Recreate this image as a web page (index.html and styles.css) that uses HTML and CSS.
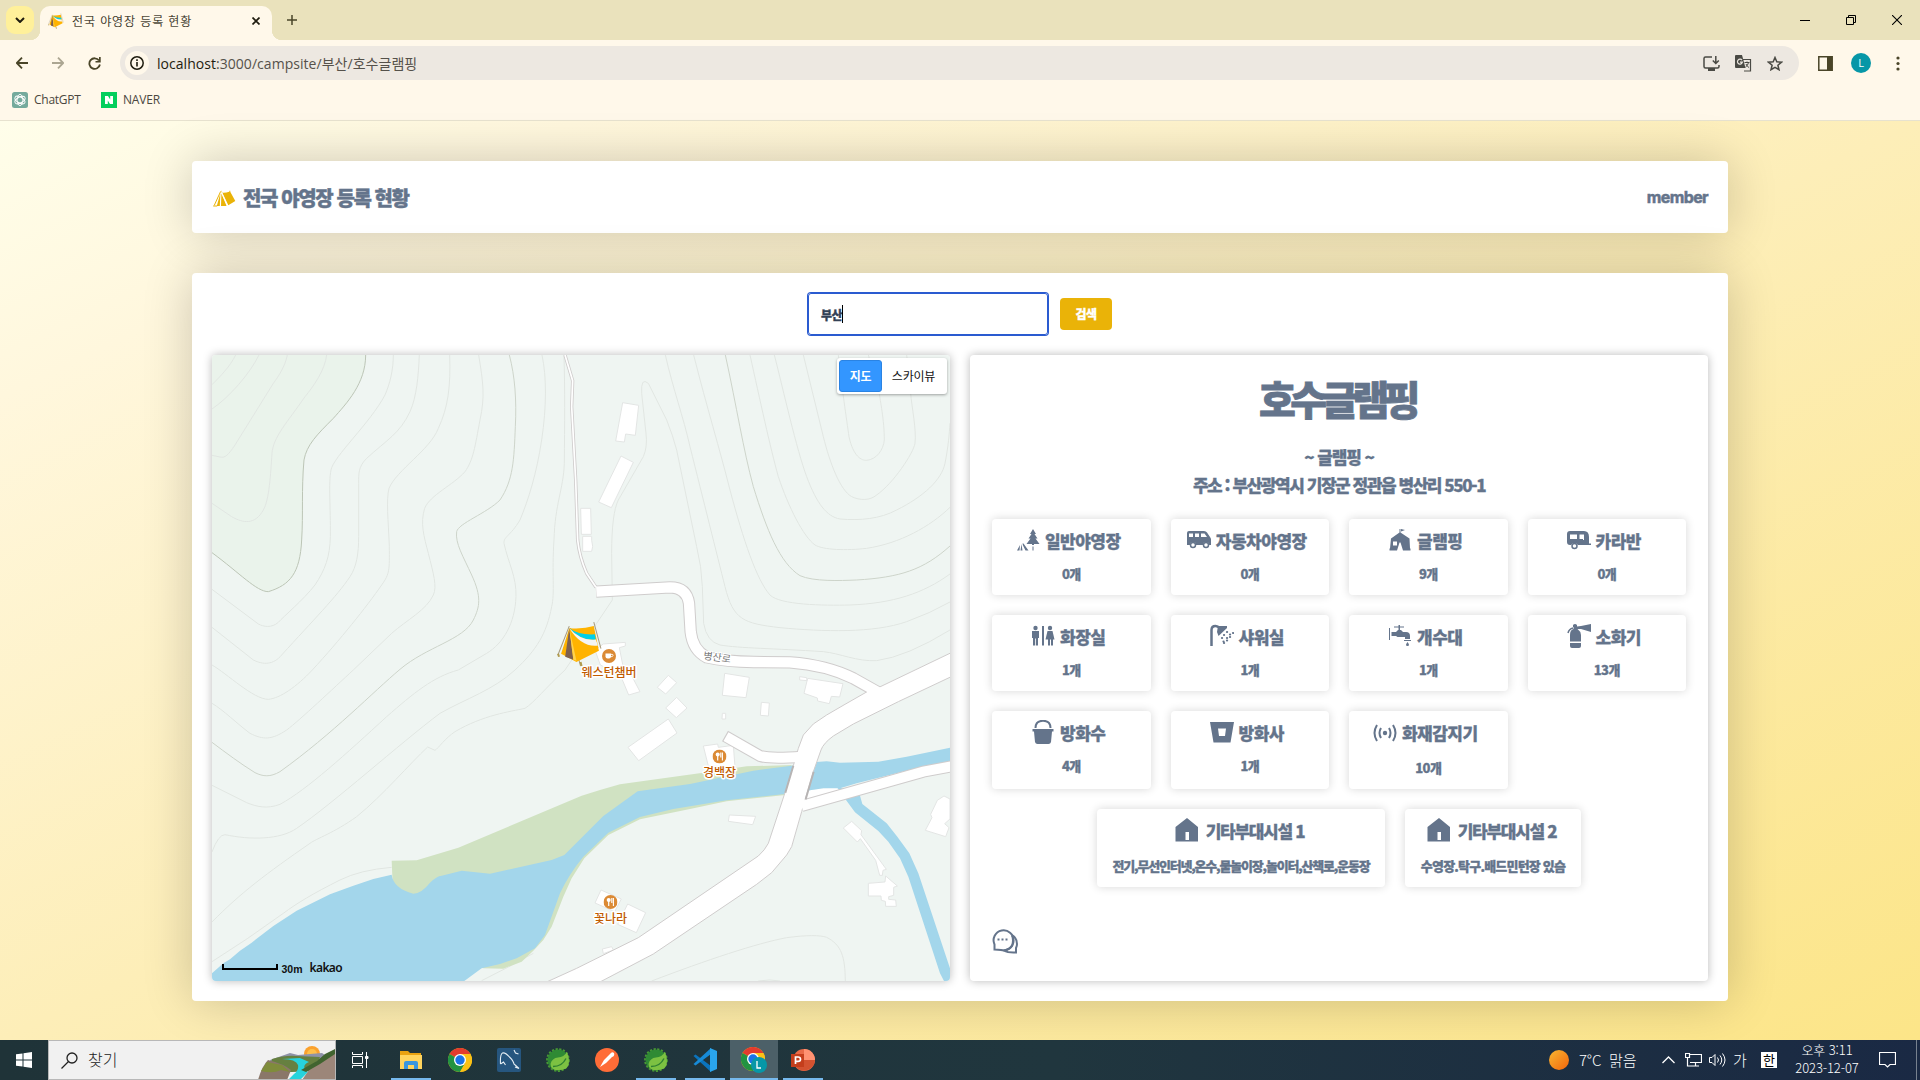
FILE: index.html
```html
<!DOCTYPE html>
<html lang="ko">
<head>
<meta charset="utf-8">
<title>전국 야영장 등록 현황</title>
<link rel="stylesheet" href="styles.css">
</head>
<body>
<svg class="defs" width="0" height="0" aria-hidden="true">
  <defs>
    <symbol id="tent-color" viewBox="0 0 45 45">
      <path d="M12 5 1 33M36 1l7 26M13 7l10 37" stroke="#a89b7e" stroke-width="1" fill="none"/>
      <path d="M12 7Q26 8 36 5l5 24-22 11-15-8z" fill="#ffb300"/>
      <path d="M12 7Q22 14 37 13l1 5Q24 20 12 7z" fill="#00cfea"/>
      <path d="M12 7Q24 20 38 18l2 6Q24 26 12 7z" fill="#f4f4f4"/>
      <path d="M12 7 8 35l8 3z" fill="#7d6050"/>
      <path d="M12 7l4 31 3 1z" fill="#ffd34d"/>
      <path d="M1 32l1 3M23 40l1 4" stroke="#b09a4c" stroke-width="2"/>
    </symbol>
    <symbol id="chrome" viewBox="0 0 24 24">
      <circle cx="12" cy="12" r="12" fill="#fbc116"/>
      <path d="M12 12 1.6 6A12 12 0 0 1 22.4 6H12z" fill="#e33b2e"/>
      <path d="M12 12 1.6 6A12 12 0 0 0 12 24l5.2-9z" fill="#229342"/>
      <path d="M12 6h10.4A12 12 0 0 1 12 24l5.2-9z" fill="#fbc116"/>
      <circle cx="12" cy="12" r="6" fill="#fff"/><circle cx="12" cy="12" r="4.700" fill="#1a73e8"/>
    </symbol>
    <symbol id="spring" viewBox="0 0 24 24">
      <circle cx="12" cy="12" r="10.800" fill="none" stroke="#4a9a35" stroke-width="2.200" stroke-dasharray="2.200 1.500"/>
      <circle cx="12" cy="12" r="10.500" fill="#2f8a34"/>
      <path d="M21 4q3 8 1.500 13T13 22Q5 23 4.500 16 6 10 12 9.500T21 4z" fill="#7cc142"/>
      <path d="M7 18.500q9 0 13-8" stroke="#2f8132" stroke-width="1.400" fill="none"/>
    </symbol>
    <symbol id="house" viewBox="0 0 24 24"><path d="M12 0 23 9v14.500H.5V9zM10.500 14v8h3.500v-8z" fill-rule="evenodd"/></symbol>
    <symbol id="fork" viewBox="0 0 14 14"><circle cx="7" cy="7" r="7" fill="#db8a35"/><circle cx="5.200" cy="5" r="2" fill="#fff"/><path d="M5.200 5v6" stroke="#fff" stroke-width="1.200"/><path d="M8.300 3v5M9.900 3v8" stroke="#fff" stroke-width="1.100"/></symbol>
  </defs>
</svg>

<header class="chrome">
  <div class="tabstrip">
    <div class="tab-search"><svg width="10" height="6" viewBox="0 0 10 6"><path d="M1 1l4 4 4-4" fill="none" stroke="#1f1c0f" stroke-width="2"/></svg></div>
    <div class="tab">
      <svg width="16" height="16"><use href="#tent-color"/></svg>
      <span class="tab-title">전국 야영장 등록 현황</span>
      <svg class="tab-close" width="8" height="8" viewBox="0 0 8 8"><path d="M.5.5l7 7M7.500.5l-7 7" stroke="#1f1c0f" stroke-width="1.700"/></svg>
    </div>
    <svg class="new-tab" width="10" height="10" viewBox="0 0 10 10"><path d="M5 0v10M0 5h10" stroke="#4a4528" stroke-width="1.500"/></svg>
    <div class="window-buttons">
      <svg width="10" height="10"><path d="M0 5.500h10" stroke="#000"/></svg>
      <svg width="10" height="10"><path d="M.5 2.500h7v7h-7zM2.500 2.500v-2h7v7h-2" fill="none" stroke="#000"/></svg>
      <svg width="10" height="10"><path d="M0 0l10 10M10 0 0 10" stroke="#000" stroke-width="1.100"/></svg>
    </div>
  </div>
  <div class="toolbar">
    <svg class="nav" width="12" height="12" viewBox="0 0 12 12"><path d="M12 6H1M6 .7.8 6 6 11.300" fill="none" stroke="#4a4528" stroke-width="1.800"/></svg>
    <svg class="nav faded" width="12" height="12" viewBox="0 0 12 12"><path d="M0 6h11M6 .7 11.200 6 6 11.300" fill="none" stroke="#4a4528" stroke-width="1.800"/></svg>
    <svg class="nav reload" width="13" height="13" viewBox="0 0 13 13"><path d="M11 3.500a5.300 5.300 0 1 0 .9 4" fill="none" stroke="#4a4528" stroke-width="1.800"/><path d="M12.700 0v5.500H7.500V4H11V0z" fill="#4a4528"/></svg>
    <div class="address-bar">
      <span class="site-info"><svg width="14" height="14" viewBox="0 0 14 14"><circle cx="7" cy="7" r="6.200" fill="none" stroke="#1f1c0f" stroke-width="1.500"/><path d="M7 6v4.500M7 3.200v1.700" stroke="#1f1c0f" stroke-width="1.600"/></svg></span>
      <span class="url"><b>localhost</b>:3000/campsite/부산/호수글램핑</span>
      <svg class="bar-icon" width="17" height="15" viewBox="0 0 17 15"><path d="M9 1H2.500Q1 1 1 2.500v8Q1 12 2.500 12h12q1.500 0 1.500-1.500V9M12.800 0v7M9.800 4.500l3 3 3-3" fill="none" stroke="#4a4a44" stroke-width="1.500"/><path d="M5 12h7v3H5z" fill="#4a4a44"/></svg>
      <svg class="bar-icon" width="17" height="17" viewBox="0 0 17 17"><path d="M7.500 4.500h8v11.500H9" fill="none" stroke="#4a4a44" stroke-width="1.200"/><path d="M0 1q0-1 1-1h6l3.500 13H1q-1 0-1-1z" fill="#4a4a44"/><path d="M7 5.200a2.500 2.500 0 1 0 .4 2H5" stroke="#ede8e1" stroke-width="1.200" fill="none"/><path d="M9.500 7.500h5M12 6.500v1M13.500 7.500q-.5 3-3 4.500M11 9q1 2.500 3 3.500" stroke="#4a4a44" fill="none"/></svg>
      <svg class="bar-icon" width="16" height="15" viewBox="0 0 16 15"><path d="M8 1.500l1.800 4.300 4.700.4-3.600 3 1.100 4.500L8 11.300l-4 2.400 1.100-4.500-3.600-3 4.700-.4z" fill="none" stroke="#4a4a44" stroke-width="1.500"/></svg>
    </div>
    <svg class="side-panel" width="15" height="15"><path d="M.8.8h13.400v13.400H.8z" fill="none" stroke="#4a4528" stroke-width="1.500"/><path d="M9 1h5v13H9z" fill="#4a4528"/></svg>
    <span class="avatar">L</span>
    <svg class="kebab" width="4" height="15"><g fill="#4a4528"><circle cx="2" cy="2" r="1.600"/><circle cx="2" cy="7.500" r="1.600"/><circle cx="2" cy="13" r="1.600"/></g></svg>
  </div>
  <div class="bookmarks">
    <svg width="16" height="16" viewBox="0 0 16 16"><rect width="16" height="16" rx="2.500" fill="#74aa9c"/><g fill="none" stroke="#fff" stroke-width=".9"><ellipse cx="8" cy="8" rx="2.900" ry="5.600"/><ellipse cx="8" cy="8" rx="2.900" ry="5.600" transform="rotate(60 8 8)"/><ellipse cx="8" cy="8" rx="2.900" ry="5.600" transform="rotate(120 8 8)"/></g></svg>
    <span class="bm-gpt">ChatGPT</span>
    <svg width="16" height="16" viewBox="0 0 16 16"><path fill="#03cf5d" d="M0 0h16v16H0z"/><path d="M4 4h3l2.200 3.500V4H12v8H9L6.800 8.500V12H4z" fill="#fff"/></svg>
    <span class="bm-naver">NAVER</span>
  </div>
</header>

<main class="page">
  <section class="card top-card">
    <svg class="brand" width="23" height="17" viewBox="0 0 23 17" fill="#eab308"><path d="M7.600 1.500 9 2l6.300 13.200L22.300 11 17.500 2.200 17 .3l-.8 1.500q-4 1.200-7.400.7L8.200.5z"/><path d="M7.400 3 6.800 16h-3zM8.400 3.500 13.600 16H8z"/><path d="M7.600 1.500 1.200 15.500M.2 16h4" stroke="#eab308" stroke-width="1"/><path d="M8.800 3 14.600 16" stroke="#fff" stroke-width=".9"/></svg>
    <h1 class="site-title">전국 야영장 등록 현황</h1>
    <a class="member">member</a>
  </section>

  <section class="card main-card">
    <form class="search-form">
      <div class="search-input">부산<i class="caret"></i></div>
      <div class="search-button">검색</div>
    </form>
    <div class="columns">
      <div class="map">
        <svg class="map-canvas" viewBox="212 355 738 626">
          <path d="M212 355h738v626H212z" fill="#eff5f2"/>
          <g transform="translate(200 340) scale(.33333)" class="contour">
            <path class="forest" d="M36 45H497C497 130 440 190 400 235C350 285 320 315 312 360C304 450 310 520 305 600C300 700 270 735 205 755C170 755 120 700 36 638Z"/>
            <path class="strong" d="M497 45C497 130 440 190 400 235C350 285 320 315 312 360C304 450 310 520 305 600C300 700 270 735 205 755C170 755 120 700 36 638"/>
            <path d="M107 45C90 80 60 110 36 134M177 45C150 100 90 170 36 207M262 45C255 80 235 110 220 130L105 315C85 345 75 355 60 351L36 346"/>
            <path d="M380 45C375 90 340 140 315 170C260 250 220 290 216 340C212 400 208 480 190 510C165 555 130 550 95 530L36 490"/>
            <path d="M580 45C580 90 570 130 555 165C510 250 400 350 393 390C385 430 392 500 391 590C390 650 375 690 345 735C310 780 250 830 235 847C215 865 190 860 175 852L36 748"/>
            <path d="M658 45C655 110 650 170 630 215C600 280 560 300 500 355C475 380 476 400 476 430V590C476 640 470 680 450 710C410 770 340 840 245 945C220 975 190 975 160 960L36 862"/>
            <path d="M749 45C752 140 745 200 715 265C690 330 590 390 567 445C558 480 565 540 568 620C568 690 570 700 545 735C500 800 420 900 337 990C290 1040 240 1075 205 1078C160 1078 80 1000 36 975"/>
            <path d="M836 45C850 130 855 170 840 240C825 320 820 360 795 395C760 435 690 465 674 505C660 550 672 590 685 640C700 700 712 740 700 765C680 810 620 840 575 880L460 990C400 1045 300 1140 260 1170C215 1200 190 1200 150 1180C110 1150 70 1110 36 1090"/>
            <path class="mid" d="M928 45C945 110 950 180 946 260C942 360 940 420 900 480C860 520 775 550 770 575C765 610 790 650 815 705C845 770 840 800 820 840C790 900 680 920 600 988C520 1055 400 1180 240 1295C210 1312 190 1310 165 1298C120 1270 80 1240 36 1207"/>
            <path d="M1026 45C1040 110 1040 200 1025 300C1010 400 985 480 960 540C930 590 910 590 912 610C925 670 950 710 948 770C945 850 910 910 860 940L775 990C700 1010 640 1060 560 1130C440 1240 320 1350 240 1393C200 1408 170 1400 140 1388L36 1336"/>
            <path d="M1092 45C1095 150 1094 250 1093 370C1090 450 1065 490 1062 600C1055 700 1065 760 1055 800C1040 880 1010 930 945 990C880 1050 800 1075 720 1120C600 1210 400 1390 290 1465C240 1500 150 1500 75 1484Q55 1484 36 1536"/>
            <path d="M1237 780L1190 850 1095 990C1040 1040 1000 1090 975 1105C930 1115 850 1125 765 1175C735 1195 715 1225 705 1231L683 1221C630 1270 550 1365 470 1430C400 1480 350 1495 330 1510C200 1600 120 1660 36 1746"/>
            <path d="M575 1582Q480 1590 420 1620C340 1660 290 1690 250 1720Q140 1800 36 1865M845 1922Q930 1880 1000 1840"/>
          </g>
          <g transform="translate(540 340) scale(.33333)" class="contour">
            <path d="M217 780L215 640Q215 520 235 480L310 350Q323 320 318 280L305 160Q302 110 325 130L380 240Q400 290 410 330L470 620Q485 680 487 740L491 850Q500 905 540 915C600 925 700 925 850 935C900 940 950 965 1010 962Q1100 950 1230 870"/>
            <path d="M376 45C400 150 430 230 450 320C490 480 530 640 555 740C580 840 610 850 720 863C850 875 1000 880 1100 845Q1170 820 1230 786"/>
            <path d="M461 45C500 200 540 330 570 450C610 600 650 720 690 765C720 795 850 797 930 795C1060 790 1150 760 1230 702"/>
            <path class="mid" d="M556 45C590 200 610 330 640 440C680 570 720 670 780 707C820 725 900 722 950 720C1080 712 1150 690 1230 618"/>
            <path d="M630 45C660 180 690 320 715 410C745 500 790 590 825 615C850 630 920 632 980 625C1080 610 1170 560 1230 502"/>
            <path d="M703 45C730 150 770 330 800 410C830 490 860 530 900 537C960 542 1020 537 1070 510C1150 470 1205 420 1215 370C1225 320 1228 280 1230 250"/>
            <path d="M790 45L850 290C870 370 900 450 935 470C960 482 990 482 1010 465C1060 430 1120 340 1125 310C1130 270 1115 200 1112 160L1100 45"/>
            <path d="M895 45C905 140 920 240 927 290C940 350 965 362 980 361C1010 358 1030 330 1033 300C1033 240 1020 180 1018 160L985 45"/>
          </g>
          <g transform="translate(540 600) scale(.33333)">
            <g class="contour"><path d="M335 1143C500 1080 650 1030 740 1013C800 1005 840 1005 860 1012C905 1035 915 1070 916 1143M655 1143Q690 1137 720 1143"/></g>
            <path fill="#d0e2c2" d="M-445 782L-370 781-245 743 125 587 180 570 240 553 500 517 620 499 755 495 735 585 560 604 450 627 300 658 205 705 133 775 95 835 70 890 35 980 10 1020-20 1052-55 1085-110 1106-170 1105-440 900z"/>
            <path fill="#fff" d="M735 582L850 565 890 563 905 572 800 600z"/>
            <path fill="#a3d6eb" d="M-984 1120L-950 1090-930 1078-900 1052-865 1028-800 978-730 932-630 883-560 857-500 837-445 824Q-440 865-380 881Q-355 880-330 848Q-310 828-295 827L-235 812-150 821 35 780 73 765 190 648 293 574 450 552 640 512 755 497 830 486 860 484 900 488 1015 485 1100 470 1230 443V485L1160 497 950 550 900 565 850 565 735 582 560 601 400 627 300 651 205 698 130 770Q85 825 60 880L15 1005-15 1045-70 1075-120 1092-175 1105-227 1143H-984z"/>
            <path fill="#a3d6eb" d="M890 560L918 600 945 637 1015 693 1045 725 1080 775 1105 830 1200 1120 1212 1143H1230V1105L1135 820 1108 760 1072 710 1040 670 967 612 958 580z"/>
            <g class="building">
              <path d="M248-592l48 8-10 90-29-4-4 24-26-3zM243-432l37 19-66 136-38-17zM122-275h30l2 78h-30zM128-191h27v12l3 18-3 15h-27z"/>
              <path d="M190 132l66-5v11l-18 5 10 50 30 40 22 42-34 10-25-60-60-30-16-45zM385 226l25 22-33 34-25-20zM410 292l31 32-32 29-32-29zM385 357l26 42-115 83-32-40zM554 220l74 12-10 61-71-7zM664 307l24 2-3 39-24-2zM547 340h10v17h-11zM779 230l21 3 1 9-22-2zM803 235l106 16-10 40-25-2-6 22-35-8-1-9-40-14z"/>
              <path d="M490 438l43-6 2 10 45-6 5 65-80-3zM568 645l79 4-9 25-73-10zM935 664l30 28-2 12 76 104-10 3-2 15h-8l-12-45-46-65-9 10-42-42zM1037 828l35 30-11 4v24l-15 4v8l21 2 2 19h-32l-1-15-12-3-1-13h-38v-38l50-4zM1212 588l18 9v60l-16 14 13 12-10 27-61-19 20-38-4-10 20-42z"/>
              <path d="M183 870l61 27-20 38-59-26zM263 912l54 26-28 60-56-25zM187 1047l28-7 5 10-30 11z"/>
            </g>
            <g class="road-edge">
              <path d="M75-735L98-658 95-580 107-360 113-180Q118-130 140-80L168-38" stroke-width="10"/>
              <path d="M168-25L390-38Q440-38 447 10L452 95Q458 150 500 172 560 185 640 186L750 187Q860 195 940 235L1020 280" stroke-width="37"/>
              <path d="M555 408L660 468Q690 477 785 470" stroke-width="36"/>
              <path d="M785 618L1150 515 1240 498" stroke-width="36"/>
            </g>
            <path class="main-road" d="M20 1146L110 1105 295 1013 655 768Q675 750 685 730L735 578 760 497 775 445 790 405 820 372 860 345 915 313 985 273 1017 262 1240 155V227L1075 305 940 372 880 408Q850 430 843 450L820 515 785 635 755 740 740 765 695 818 650 853 340 1062 180 1146z"/>
            <g class="road-fill">
              <path d="M75-735L98-658 95-580 107-360 113-180Q118-130 140-80L168-38" stroke-width="5"/>
              <path d="M169-25L390-38Q440-38 447 10L452 95Q458 150 500 172 560 185 640 186L750 187Q860 195 940 235L1020 280" stroke-width="31"/>
              <path d="M558 410L660 468Q690 477 785 470" stroke-width="30"/>
              <path d="M785 618L1150 515 1240 498" stroke-width="30"/>
            </g>
            <path d="M760 497l-24 81M821 515l-24 83" stroke="#b7b4b4" stroke-width="6"/>
          </g>
          <text class="road-name" transform="translate(703 659) rotate(8)">병산로</text>
          <g transform="translate(602 649)"><circle cx="7" cy="7" r="7" fill="#db8a35"/><path d="M3.500 4.500h5.500v3q0 2-2 2H5.500q-2 0-2-2z" fill="#fff"/><path d="M9 5.300q2.500-.3 2 1.400-.3 1.200-2 1" fill="none" stroke="#fff" stroke-width=".9"/></g>
          <use href="#fork" x="712.500" y="749.500" width="14" height="14"/>
          <use href="#fork" x="603.500" y="895" width="14" height="14"/>
          <g class="place"><text x="609" y="677">웨스턴챔버</text><text x="719.500" y="777">경백장</text><text x="610.500" y="922.500">꽃나라</text></g>
          <use href="#tent-color" x="557" y="621" width="46" height="46"/>
          <path d="M223 964v5h54v-5" fill="none" stroke="#000" stroke-width="2"/>
          <text x="281.500" y="973" class="scale">30m</text>
          <text x="309.500" y="972" class="kakao">kakao</text>
        </svg>
        <div class="map-type"><span class="active">지도</span><span>스카이뷰</span></div>
      </div>

      <article class="detail">
        <h2 class="camp-name">호수글램핑</h2>
        <p class="camp-line">~ 글램핑 ~</p>
        <p class="camp-line address">주소 : 부산광역시 기장군 정관읍 병산리 550-1</p>
        <div class="facilities">
          <div class="facility"><h3><svg viewBox="0 0 24 24"><path d="M17 1l3 5h-1.500l3 4.500h-2l4 5.500h-5.500v1h-2v-1h-5.500l4-5.500h-2l3-4.500H14zM16.500 18.500h1v4h-1zM6.500 15.500h1l5 7H9.500l-2.500-5zM5.500 16l1 6.500H4.500zM4 17l-.5 5.500H1z"/></svg>일반야영장</h3><p>0개</p></div>
          <div class="facility"><h3><svg viewBox="0 0 24 24"><path fill-rule="evenodd" d="M2 3h15q2 0 3 1.500l3 4.500q1 1 1 2.500V17h-2a3 3 0 0 0-6 0H9a3 3 0 0 0-6 0H0V5q0-2 2-2zM2 5.500V9h4V5.500zM8 5.500V9h4V5.500zM14 5.500V9h6l-2.500-3.500z"/><circle cx="6" cy="17" r="2.500" fill="none" stroke="currentColor" stroke-width="1.500"/><circle cx="19" cy="17" r="2.500" fill="none" stroke="currentColor" stroke-width="1.500"/></svg>자동차야영장</h3><p>0개</p></div>
          <div class="facility"><h3><svg viewBox="0 0 24 24"><path fill-rule="evenodd" d="M11.500 1h1v3.500l9 6 .5 10h.5v2H15l-2.500-8h-1L9 22.500H1.500v-2H2l1-10 8.500-6zM5 13.500v4h4v-4zM13 1l4 1-4 1.500z"/></svg>글램핑</h3><p>9개</p></div>
          <div class="facility"><h3><svg viewBox="0 0 24 24"><path fill-rule="evenodd" d="M3 3h14q5 0 5 6v6.500h2V17H11a4 4 0 0 0-7 0H3q-3 0-3-3V6q0-3 3-3zM3 6.500V11h7V6.500zM12.500 6.500V11h3.500v1h1V6.500z"/><circle cx="7.500" cy="18" r="2.500" fill="none" stroke="currentColor" stroke-width="1.500"/></svg>카라반</h3><p>0개</p></div>

          <div class="facility"><h3><svg viewBox="0 0 24 24"><circle cx="4.500" cy="4" r="2.200"/><circle cx="19" cy="4" r="2.200"/><path d="M1 7h7v7H7v7.500H5v-7h-.8v7H2V14H1zM11 2h2v19.500h-2zM16.500 7h5l2 8.500H22v6h-2v-6h-1v6h-2v-6h-2.500z"/></svg>화장실</h3><p>1개</p></div>
          <div class="facility"><h3><svg viewBox="0 0 24 24"><path d="M1.500 22V6q0-4 4-4 2.500 0 4 2" fill="none" stroke="currentColor" stroke-width="2.500"/><path d="M8 2h9v2L8.500 12l-1.500-4z"/><path d="M17 8h.1M20 10.500h.1M23 9h.1M14 11h.1M17 14h.1M20 13h.1M12 14h.1M13.500 17.500h.1M17 16.500h.1M14 19h.1" stroke="currentColor" stroke-width="2.200" stroke-linecap="round"/></svg>샤워실</h3><p>1개</p></div>
          <div class="facility"><h3><svg viewBox="0 0 24 24"><path d="M1 4h1v12H1zM3.500 8H8l2-2h3l2 2h3q4 0 4 4v3h-5v-2H9.500L8 12H3.500zM6 2.500h10v1H6zM10.500 1h1.500v6h-1.500zM16 16h7v1h-7zM19.500 18q3 4 0 4t0-4z"/></svg>개수대</h3><p>1개</p></div>
          <div class="facility"><h3><svg viewBox="0 0 24 24"><path fill-rule="evenodd" d="M3 11q0-5 3.500-6V3H6V1q2-2 4 0v1.500L14 2l10-2v8l-10-3h-3.500q3 2 3.500 6v6.500H3zM3 19h11v3q0 2-2 2H5q-2 0-2-2z"/><path d="M6 4Q2 5 1 9" fill="none" stroke="currentColor" stroke-width="1.500"/></svg>소화기</h3><p>13개</p></div>

          <div class="facility"><h3><svg viewBox="0 0 24 24"><path d="M1.500 9h21v2.500H21L20 22q-.5 2-2.500 2h-11Q4.500 24 4 22L3 11.500H1.500z"/><path d="M4.500 8q0-7.200 7.500-7.200T19.500 8" fill="none" stroke="currentColor" stroke-width="2"/></svg>방화수</h3><p>4개</p></div>
          <div class="facility"><h3><svg viewBox="0 0 24 24"><path fill-rule="evenodd" d="M0 2h24l-3.500 20.500H3.500zM8 8.500l1 7.500h6l1-7.500z"/></svg>방화사</h3><p>1개</p></div>
          <div class="facility alarm"><h3><svg viewBox="0 0 24 24"><circle cx="12" cy="12" r="2.200"/><path d="M4 4q-5 8 0 16M20 4q5 8 0 16M8 7q-3 5 0 10M16 7q3 5 0 10" fill="none" stroke="currentColor" stroke-width="2"/></svg>화재감지기</h3><p>10개</p></div>
        </div>
        <div class="extras">
          <div class="facility extra-one"><h3><svg><use href="#house"/></svg>기타부대시설 1</h3><p>전기,무선인터넷,온수,물놀이장,놀이터,산책로,운동장</p></div>
          <div class="facility extra-two"><h3><svg><use href="#house"/></svg>기타부대시설 2</h3><p>수영장.탁구.배드민턴장 있슴</p></div>
        </div>
        <svg class="chat" width="28" height="26" viewBox="0 0 28 26"><path d="M3.500 21.500v-5A10 10 0 1 1 10 22q-3-.3-6.500-.5z" fill="none" stroke="currentColor" stroke-width="2"/><path d="M21 7q5 3 5 9 0 2-1 4v4.500q-8 .5-12-2 6-1 8-5 2-5 0-10" fill="none" stroke="currentColor" stroke-width="2"/><path d="M6.500 11.500h2M10.500 11.500h2M14.500 11.500h2" stroke="currentColor" stroke-width="2"/></svg>
      </article>
    </div>
  </section>
</main>

<footer class="taskbar">
  <div class="start"><svg width="16" height="16"><path d="M0 2.300 6.500 1.400v6.100H0zM7.500 1.200 16 0v7.500H7.500zM0 8.500h6.500v6.100L0 13.700zM7.500 8.500H16V16l-8.500-1.200z" fill="#fff"/></svg></div>
  <div class="search">
    <svg width="17" height="17" viewBox="0 0 17 17"><circle cx="11" cy="6" r="5" fill="none" stroke="#222" stroke-width="1.300"/><path d="M7.500 9.500.5 16.500" stroke="#222" stroke-width="1.300"/></svg>
    <span>찾기</span>
    <svg class="landscape" width="77" height="36" viewBox="0 0 77 36">
      <circle cx="54" cy="10" r="8" fill="#fba12d"/><circle cx="54" cy="10" r="5" fill="#ffc04a"/>
      <path d="M12 16l20-7 8 2 24-2 6 4-4 10H14z" fill="#8f93a8"/>
      <path d="M14 15q14-4 24-3l24 1-5 14-46 2z" fill="#668040"/>
      <path d="M24 15q14 0 16 6 1 5-4 9l-6 6h12l8-8q-8-6 1-10l-9-4z" fill="#27d3dc"/>
      <path d="M0 36q4-14 10-20 16 4 23 10l-4 10z" fill="#8a7769"/>
      <path d="M3 27q12 3 20-1l9 2-8-7-15-3z" fill="#7f8c3b"/>
      <path d="M44 36q8-12 14-18l19-12v30z" fill="#9c8679"/>
      <path d="M43 26l16-9 8-7 10-5v5L62 20l-14 8z" fill="#41642f"/>
    </svg>
  </div>
  <nav class="apps">
    <div><svg width="17" height="16" viewBox="0 0 17 16" fill="none" stroke="#fff"><path d="M.5 0v2.500h10V0M.5 16v-2.500h10V16M.5 4.500h10v7H.5zM14.500 0v16"/><path d="M13.500 4.500h2.500v2h-2.500z" fill="#fff"/></svg></div>
    <div class="open"><svg width="22" height="18"><path d="M0 0h8l2 2h11v15H0z" fill="#e9a211"/><path d="M0 4h22v14H0z" fill="#ffd45e"/><path d="M4 18v-6q0-2 2-2h10q2 0 2 2v6h-4v-4H8v4z" fill="#3a96dd"/></svg></div>
    <div><svg width="24" height="24"><use href="#chrome"/></svg></div>
    <div><svg width="24" height="24"><rect width="24" height="24" rx="2" fill="#26567f"/><path d="M3.500 16Q3 6 5.500 5t7 4q4 4 4.500 7l5 4.500-4-1.500M3.500 16l3-2 2 3M17 2l1.500 3 3 1" fill="none" stroke="#e6eff5" stroke-width="1.100"/></svg></div>
    <div><svg width="24" height="24"><use href="#spring"/></svg></div>
    <div><svg width="24" height="24"><circle cx="12" cy="12" r="12" fill="#ff6c37"/><path d="M19 5q-2-2-4 1l-6 6-4 7 6-4 6-6q3-1 2-4z" fill="#fff"/></svg></div>
    <div class="open"><svg width="24" height="24"><use href="#spring"/></svg></div>
    <div class="open"><svg width="24" height="24"><path d="M.5 8l2-1.500L18 18v6z" fill="#0b74bd"/><path d="M.5 16l2 1.500L18 6V0z" fill="#178bd7"/><path d="M17 0l7 3v18l-7 3z" fill="#2aa6ee"/></svg></div>
    <div class="open current"><svg width="26" height="26" viewBox="0 0 26 26"><use href="#chrome" width="24" height="24"/><circle cx="18" cy="18" r="8" fill="#0797a7"/><path d="M16 14v7h4" stroke="#fff" stroke-width="1.300" fill="none"/></svg></div>
    <div class="open"><svg width="24" height="24"><circle cx="13" cy="12" r="11" fill="#e96b48"/><path d="M13 1a11 11 0 0 1 11 11H13z" fill="#ff9272"/><path d="M2 12h22a11 11 0 0 1-21 4z" fill="#d35230"/><path d="M0 6h13v13H0z" fill="#c43e1c"/><path d="M4.500 16V9H7q2.500 0 2.500 2.200T7 13.400H5" fill="none" stroke="#fff" stroke-width="1.700"/></svg></div>
  </nav>
  <div class="tray">
    <i class="sun"></i>
    <span class="weather">7°C&nbsp; 맑음</span>
    <svg class="chev" width="13" height="8"><path d="M.5 7l6-6 6 6" fill="none" stroke="#fff" stroke-width="1.300"/></svg>
    <svg class="net" width="17" height="14"><path d="M5 1.500h11.500v8H5M.5.500h4v4h-4zM2.500 5v8H14M10.500 9.500V13" fill="none" stroke="#fff" stroke-width="1.200"/></svg>
    <svg class="vol" width="17" height="14"><path d="M.5 4.500H3l3-3v11l-3-3H.5zM8.500 4.500q2 2.500 0 5M11 2.500q3.500 4.500 0 9M13.500.5q5 6.500 0 13" fill="none" stroke="#fff"/></svg>
    <span class="ime">가</span>
    <span class="han">한</span>
    <span class="clock">오후 3:11<br>2023-12-07</span>
    <svg class="note" width="17" height="16"><path d="M.5.500h16v12H11l-2.500 2.500L6 12.500H.5z" fill="none" stroke="#fff" stroke-width="1.200"/></svg>
    <i class="show-desktop"></i>
  </div>
</footer>
</body>
</html>
```
FILE: styles.css
```css
* { box-sizing: border-box; }
html, body { margin: 0; height: 100%; overflow: hidden; }
body {
  display: flex;
  flex-direction: column;
  width: 1920px;
  height: 1080px;
  font-family: "Noto Sans CJK KR", "Noto Sans", sans-serif;
  color: #64748b;
}
.defs { position: absolute; }
svg { display: block; flex: none; }
h1, h2, h3, p { margin: 0; }

/* Browser frame */
.chrome { height: 121px; background: #fff8ea; border-bottom: 1px solid #e7e2cf; flex: none; font-family: "Open Sans", "Noto Sans CJK KR", sans-serif; }
.tabstrip { display: flex; align-items: center; height: 40px; padding-left: 6px; background: #eae2bc; }
.tab-search { display: grid; place-items: center; width: 28px; height: 28px; border-radius: 9px; background: #fff09a; }
.tab { display: flex; align-items: center; align-self: flex-end; position: relative; width: 232px; height: 34px; margin-left: 6px; padding: 0 12px 5px 8px; border-radius: 10px 10px 0 0; background: #fff8ea; }
.tab::before, .tab::after { content: ""; position: absolute; bottom: 0; width: 10px; height: 10px; }
.tab::before { left: -10px; background: radial-gradient(circle at 0 0, transparent 10px, #fff8ea 10.5px); }
.tab::after { right: -10px; background: radial-gradient(circle at 100% 0, transparent 10px, #fff8ea 10.5px); }
.tab-title { margin-left: 8px; color: #1f1c0f; font: 300 12px "Noto Sans CJK KR", sans-serif; letter-spacing: .9px; white-space: nowrap; -webkit-text-stroke: .2px; }
.tab-close { margin-left: auto; }
.new-tab { margin-left: 15px; }
.window-buttons { display: flex; gap: 36px; margin-left: auto; padding-right: 18px; }
.toolbar { display: flex; align-items: center; height: 46px; padding: 0 20px 0 16px; border-radius: 8px 8px 0 0; background: #fff8ea; }
.nav { margin-right: 24px; }
.reload { margin-right: 19px; }
.faded { opacity: .45; }
.address-bar { display: flex; align-items: center; flex: 1; height: 34px; padding: 0 16px 0 5px; border-radius: 17px; background: #ede8e1; }
.site-info { display: grid; place-items: center; width: 24px; height: 24px; border-radius: 50%; background: #fff8ea; }
.url { margin: -1px auto 0 8px; color: #55514a; font-size: 14px; letter-spacing: .04px; }
.url b { color: #1f1c0f; font-weight: 400; }
.bar-icon { margin-left: 15px; }
.side-panel { margin-left: 19px; }
.avatar { width: 20px; height: 20px; margin: 0 25px 0 18px; border-radius: 50%; background: #0797a7; color: #fff; font-size: 11px; line-height: 20px; text-align: center; }
.bookmarks { display: flex; align-items: center; height: 28px; padding-left: 12px; color: #4a4740; font-size: 12px; line-height: 16px; }
.bookmarks span { padding-bottom: 1px; }
.bm-gpt { width: 67px; margin-left: 6px; letter-spacing: -.25px; }
.bm-naver { margin-left: 6px; letter-spacing: -.2px; }

/* Page */
.page { flex: 1; padding: 40px 192px 39px; background: linear-gradient(to bottom right, #fffeea 0%, #fff7dd 15%, #fdeeb8 50%, #fce588 100%); }
.card { border-radius: 4px; background: #fff; box-shadow: 0 0 50px rgba(0, 0, 0, .2); }
.top-card { display: flex; align-items: center; height: 72px; padding: 0 20px; }
.brand { margin: 3px 0 0 1px; }
.site-title { margin-left: 7px; font-size: 20px; font-weight: 900; letter-spacing: -1.4px; -webkit-text-stroke: .4px; }
.member { margin-left: auto; font: 700 16px Inter, sans-serif; letter-spacing: -.6px; -webkit-text-stroke: .5px; }
.main-card { height: 728px; margin-top: 40px; padding: 20px; }
.search-form { display: flex; justify-content: center; align-items: center; gap: 12px; height: 42px; }
.search-input { display: flex; align-items: center; width: 240px; height: 42px; padding-left: 12px; border: 1px solid #2a5bd0; border-radius: 3px; box-shadow: 0 0 0 1px #2a5bd0; color: #334155; font-size: 12px; font-weight: 900; letter-spacing: -.5px; -webkit-text-stroke: .3px; }
.caret { width: 1px; height: 18px; background: #000; }
.search-button { width: 52px; height: 32px; border-radius: 4px; background: #eab308; color: #fff; font-size: 12px; font-weight: 900; line-height: 32px; text-align: center; letter-spacing: -.5px; -webkit-text-stroke: .3px; }
.columns { display: grid; grid-template-columns: 1fr 1fr; gap: 20px; height: 626px; margin-top: 20px; }
.map, .detail { border-radius: 4px; box-shadow: 0 0 10px rgba(0, 0, 0, .28); }

/* Map */
.map { position: relative; }
.map-canvas { width: 738px; height: 626px; border-radius: 4px; overflow: hidden; }
.contour path { fill: none; stroke: #e1e6e2; stroke-width: 3; }
.contour .forest { fill: #eaf3eb; stroke: none; }
.contour .strong { stroke: #bcc5b6; }
.contour .mid { stroke: #cdd4ca; }
.building { fill: #fff; stroke: #e3e5e4; stroke-width: 3; }
.road-edge { fill: none; stroke: #cfcccc; }
.road-fill { fill: none; stroke: #fff; }
.main-road { fill: #fff; stroke: #cfcccc; stroke-width: 3; }
.road-name { fill: #777; font-size: 10px; stroke: #fff; stroke-width: 2px; paint-order: stroke; }
.place { fill: #c15b00; font-size: 12px; font-weight: 500; text-anchor: middle; stroke: #fff; stroke-width: 3px; paint-order: stroke; stroke-linejoin: round; }
.scale { font: 700 10.5px "Liberation Sans", sans-serif; fill: #111; }
.kakao { font: 600 12px "Noto Sans", sans-serif; fill: #111; letter-spacing: -.6px; }
.map-type { position: absolute; top: 3px; right: 3px; display: flex; width: 110px; height: 36px; padding: 2px; border-radius: 3px; background: #fff; box-shadow: 0 1px 3px rgba(0, 0, 0, .35); color: #111; font-size: 12px; line-height: 31px; text-align: center; }
.map-type span { width: 63px; letter-spacing: -.2px; }
.map-type .active { width: 43px; height: 32px; border: 1px solid #2a83e3; border-radius: 3px; background: #3396ff; line-height: 30px; color: #fff; font-weight: 700; }

/* Campsite detail */
.detail { display: flex; flex-direction: column; padding: 14px 22px 27px; text-align: center; font-weight: 900; }
.camp-name { height: 60px; margin-bottom: 14px; font-size: 40px; font-weight: 900; line-height: 58px; letter-spacing: -5.6px; padding-right: 4px; -webkit-text-stroke: .8px; }
.camp-line { height: 28px; font-size: 17px; line-height: 27px; letter-spacing: -1.1px; -webkit-text-stroke: .3px; }
.address { letter-spacing: -1.45px; }
.facilities { display: grid; grid-template-columns: repeat(4, 1fr); grid-template-rows: 76px 76px 78px; gap: 20px; margin-top: 20px; }
.facility { padding-top: 10px; border-radius: 4px; box-shadow: 0 0 10px rgba(0, 0, 0, .16); -webkit-text-stroke: .3px; }
.facility h3 { display: flex; justify-content: center; align-items: center; gap: 5px; height: 24px; padding-right: 6px; font-size: 17px; font-weight: 900; line-height: 22px; letter-spacing: -.5px; white-space: nowrap; }
.facility h3 svg { width: 24px; height: 24px; margin-top: -2px; fill: currentColor; }
.facility p { margin-top: 9px; font-size: 13px; line-height: 24px; letter-spacing: -.6px; white-space: nowrap; }
.alarm h3 svg { margin-top: 0; }
.alarm p { padding-top: 2px; }
.extras { display: flex; justify-content: center; gap: 20px; margin-top: 20px; }
.extras .facility { height: 78px; }
.extras p { margin-top: 11px; }
.extra-one { width: 288px; }
.extra-one p { letter-spacing: -1.2px; }
.extra-two { width: 176px; }
.extra-two p { letter-spacing: -.8px; }
.extras h3 { gap: 7px; padding-right: 3px; letter-spacing: -1.3px; }
.chat { margin-top: auto; margin-left: -1px; }

/* Taskbar */
.taskbar { display: flex; height: 40px; flex: none; background: linear-gradient(90deg, #1f3338 0%, #20363e 55%, #1a2944 100%); color: #fff; }
.start { display: grid; place-items: center; width: 48px; }
.search { display: flex; align-items: center; position: relative; width: 288px; padding-left: 12px; border: 1px solid #b8b8b8; background: #f1f1f1; color: #222; font-size: 16px; overflow: hidden; }
.search span { margin: -3px 0 0 10px; font-weight: 300; }
.landscape { margin: 3px 0 0 auto; }
.apps { display: flex; gap: 1px; }
.apps div { display: grid; place-items: center; width: 48px; height: 40px; }
.apps div:first-child { margin-right: 2px; }
.open { background: linear-gradient(#76b9ed, #76b9ed) center bottom / 40px 2px no-repeat; }
.apps .current { background-color: #4c6068; background-size: 48px 2px; }
.tray { display: flex; align-items: center; margin-left: auto; white-space: nowrap; }
.sun { width: 20px; height: 20px; border-radius: 50%; background: linear-gradient(135deg, #f9b731, #f3650c); }
.weather { width: 83px; margin: -2px 0 0 10px; font-size: 15px; font-weight: 300; letter-spacing: -.2px; }
.chev { width: 13px; }
.net { margin-left: 10px; }
.vol { margin-left: 7px; }
.ime { width: 28px; margin: -2px 0 0 7px; font-size: 15px; font-weight: 300; }
.han { width: 16px; height: 16px; background: #fff; color: #000; font-size: 13px; line-height: 15px; text-align: center; }
.clock { width: 90px; margin: -3px 7px 0 5px; font-size: 13px; font-weight: 300; line-height: 18px; letter-spacing: -.1px; text-align: center; }
.note { margin-right: 20px; }
.show-desktop { width: 4px; height: 40px; border-left: 1px solid #77818f; }
```
